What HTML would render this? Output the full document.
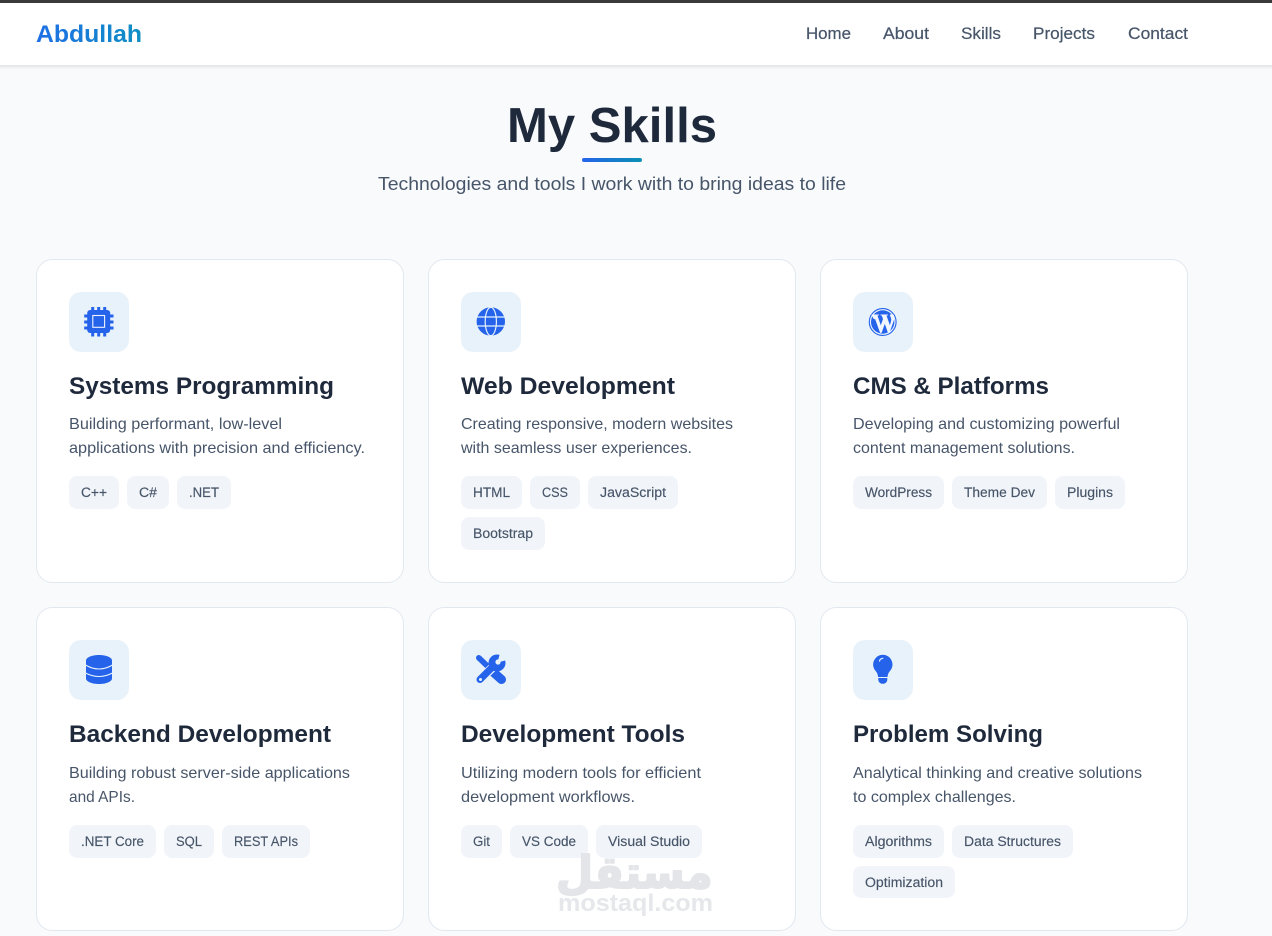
<!DOCTYPE html>
<html lang="en"><head><meta charset="utf-8"><title>My Skills</title>
<style>
html,body{margin:0;padding:0;width:1272px;height:936px;overflow:hidden;background:#f8fafc}
svg{display:block;position:absolute;left:0;top:0}
text{font-family:"Liberation Sans",sans-serif}
.n{font-size:16.4px;fill:#475569;stroke:#475569;stroke-width:.2}
.h{font-size:24.5px;font-weight:700;fill:#1e293b}
.d{font-size:15.6px;fill:#475569}
.t{font-size:13.4px;fill:#475569;stroke:#475569;stroke-width:.15}
.c{fill:#fff;stroke:#e2e8f0}
.b{fill:#f1f5f9}
.i{fill:#e8f2fb}
</style></head><body>
<svg width="1272" height="936" viewBox="0 0 1272 936" xmlns="http://www.w3.org/2000/svg">
<defs>
<linearGradient id="g1" gradientUnits="userSpaceOnUse" x1="36" y1="0" x2="142" y2="0"><stop offset="0" stop-color="#1f6fe5"/><stop offset="1" stop-color="#0e8fc4"/></linearGradient>
<linearGradient id="g2" gradientUnits="userSpaceOnUse" x1="582" y1="0" x2="642" y2="0"><stop offset="0" stop-color="#2563eb"/><stop offset="1" stop-color="#0891b2"/></linearGradient>
<filter id="s" x="-5%" y="-50%" width="110%" height="200%"><feDropShadow dx="0" dy="1" stdDeviation="2.5" flood-color="#000" flood-opacity=".14"/></filter>
</defs>
<rect width="1272" height="936" fill="#f8fafc"/>
<rect x="-10" y="3" width="1292" height="62" fill="#fff" filter="url(#s)"/>
<rect width="1272" height="3" fill="#3a3a3a"/>
<text x="36" y="42" font-size="24.5" font-weight="700" fill="url(#g1)" textLength="106" lengthAdjust="spacingAndGlyphs">Abdullah</text>
<text class="n" x="806" y="39" textLength="45" lengthAdjust="spacingAndGlyphs">Home</text>
<text class="n" x="883" y="39" textLength="46" lengthAdjust="spacingAndGlyphs">About</text>
<text class="n" x="961" y="39" textLength="40" lengthAdjust="spacingAndGlyphs">Skills</text>
<text class="n" x="1033" y="39" textLength="62" lengthAdjust="spacingAndGlyphs">Projects</text>
<text class="n" x="1128" y="39" textLength="60" lengthAdjust="spacingAndGlyphs">Contact</text>

<text x="507" y="142" font-size="49" font-weight="700" fill="#1e293b" textLength="210" lengthAdjust="spacingAndGlyphs">My Skills</text>
<rect x="582" y="158" width="60" height="4" rx="2" fill="url(#g2)"/>
<text x="378" y="190" font-size="18" fill="#475569" textLength="468" lengthAdjust="spacingAndGlyphs">Technologies and tools I work with to bring ideas to life</text>

<!-- cards -->
<rect class="c" x="36.5" y="259.5" width="367" height="323" rx="16"/>
<rect class="c" x="428.5" y="259.5" width="367" height="323" rx="16"/>
<rect class="c" x="820.5" y="259.5" width="367" height="323" rx="16"/>
<rect class="c" x="36.5" y="607.5" width="367" height="323" rx="16"/>
<rect class="c" x="428.5" y="607.5" width="367" height="323" rx="16"/>
<rect class="c" x="820.5" y="607.5" width="367" height="323" rx="16"/>

<rect class="i" x="69" y="292" width="60" height="60" rx="12"/>
<rect class="i" x="461" y="292" width="60" height="60" rx="12"/>
<rect class="i" x="853" y="292" width="60" height="60" rx="12"/>
<rect class="i" x="69" y="640" width="60" height="60" rx="12"/>
<rect class="i" x="461" y="640" width="60" height="60" rx="12"/>
<rect class="i" x="853" y="640" width="60" height="60" rx="12"/>

<!-- chip -->
<g fill="#2563eb">
<rect x="87.200" y="310" width="23" height="23" rx="3"/>
<path d="M91.200 307h3v4h-3zM97.200 307h3v4h-3zM103.200 307h3v4h-3zM91.200 332h3v4.500h-3zM97.200 332h3v4.500h-3zM103.200 332h3v4.500h-3zM84.200 314.500h4v3h-4zM84.200 320.500h4v3h-4zM84.200 326.500h4v3h-4zM109.200 314.500h4.300v3h-4.300zM109.200 320.500h4.300v3h-4.300zM109.200 326.500h4.300v3h-4.300z"/>
<rect x="92.800" y="315.500" width="11.800" height="11.800" fill="#2563eb" stroke="#eef4fc" stroke-width="1.100"/>
</g>
<!-- globe -->
<g>
<circle cx="490.800" cy="321.500" r="14.200" fill="#2563eb"/>
<g fill="none" stroke="#e8f2fb" stroke-width="1.200">
<ellipse cx="490.800" cy="321.500" rx="5.600" ry="14.200"/>
<path d="M476.500 317h28.500M476.500 326h28.500"/>
</g>
</g>
<!-- wordpress -->
<g>
<circle cx="882.700" cy="322" r="13.400" fill="none" stroke="#2563eb" stroke-width="1.100"/>
<circle cx="882.700" cy="322" r="11.700" fill="#2563eb"/>
<path d="M871.500 314.500h7.500v.8l-1.500.3 3.300 9.700 2.200-6.300-1.200-3.400-1.300-.3v-.8h7.500v.8l-1.500.3 3.400 9.600 1.100-3.900c.6-2.400-.1-3.900-.9-5.300l-.3-1.500h3.600l.5 1c.6 2.200.4 3.700-.5 6.200l-3.900 11.200h-1.500l-3.200-9-3.200 9h-1.500l-4.900-13.700-1.600-.3z" fill="#f2f6fd"/>
</g>
<!-- database -->
<g>
<path d="M86 660.500c0-3 5.800-5.500 13-5.500s13 2.500 13 5.500v18c0 3-5.800 5.500-13 5.500s-13-2.500-13-5.500z" fill="#2563eb"/>
<path d="M85.500 665Q99 673 112.500 665M85.500 673Q99 680 112.500 673" fill="none" stroke="#e8f2fb" stroke-width="1.100"/>
</g>
<!-- tools -->
<g>
<path d="M478.800 657.800l13 12.500" fill="none" stroke="#2563eb" stroke-width="5.600" stroke-linecap="round"/>
<path d="M493 672l8.500 7.500" stroke="#2563eb" stroke-width="9" stroke-linecap="round"/>
<path d="M492.500 667.500l-13.500 13" stroke="#e8f2fb" stroke-width="9"/>
<path d="M491.500 668l-11.500 11.500" stroke="#2563eb" stroke-width="7" stroke-linecap="round"/>
<circle cx="497" cy="663" r="8.500" fill="#2563eb"/>
<path d="M497.500 662.500L500 653L507 653L507 660z" fill="#e8f2fb"/>
<circle cx="498" cy="662" r="2.600" fill="#e8f2fb"/>
<circle cx="480.500" cy="679.500" r="1.500" fill="#e8f2fb"/>
</g>
<!-- bulb -->
<g fill="#2563eb">
<path d="M882.800 654.800a9.700 9.700 0 0 1 7 16.400c-1.200 1.300-2 3-2.300 5.800h-9.400c-.3-2.800-1.100-4.500-2.300-5.800a9.700 9.700 0 0 1 7-16.400z"/>
<path d="M878.300 678h9v1.500c0 2.500-2 4.300-4.500 4.300s-4.500-1.800-4.500-4.300z"/>
<path d="M879.500 661c.3-1.300 1.600-2.500 3.300-2.700" fill="none" stroke="#e8f2fb" stroke-width="1.200" stroke-linecap="round"/>
</g>

<!-- titles -->
<text class="h" x="69" y="394" textLength="265" lengthAdjust="spacingAndGlyphs">Systems Programming</text>
<text class="h" x="461" y="394" textLength="214" lengthAdjust="spacingAndGlyphs">Web Development</text>
<text class="h" x="853" y="394" textLength="196" lengthAdjust="spacingAndGlyphs">CMS &amp; Platforms</text>
<text class="h" x="69" y="742" textLength="262" lengthAdjust="spacingAndGlyphs">Backend Development</text>
<text class="h" x="461" y="742" textLength="224" lengthAdjust="spacingAndGlyphs">Development Tools</text>
<text class="h" x="853" y="742" textLength="190" lengthAdjust="spacingAndGlyphs">Problem Solving</text>

<!-- descriptions -->
<text class="d" x="69" y="429" textLength="213" lengthAdjust="spacingAndGlyphs">Building performant, low-level</text>
<text class="d" x="69" y="453" textLength="296" lengthAdjust="spacingAndGlyphs">applications with precision and efficiency.</text>
<text class="d" x="461" y="429" textLength="272" lengthAdjust="spacingAndGlyphs">Creating responsive, modern websites</text>
<text class="d" x="461" y="453" textLength="231" lengthAdjust="spacingAndGlyphs">with seamless user experiences.</text>
<text class="d" x="853" y="429" textLength="267" lengthAdjust="spacingAndGlyphs">Developing and customizing powerful</text>
<text class="d" x="853" y="453" textLength="222" lengthAdjust="spacingAndGlyphs">content management solutions.</text>
<text class="d" x="69" y="778" textLength="281" lengthAdjust="spacingAndGlyphs">Building robust server-side applications</text>
<text class="d" x="69" y="802" textLength="66" lengthAdjust="spacingAndGlyphs">and APIs.</text>
<text class="d" x="461" y="778" textLength="240" lengthAdjust="spacingAndGlyphs">Utilizing modern tools for efficient</text>
<text class="d" x="461" y="802" textLength="174" lengthAdjust="spacingAndGlyphs">development workflows.</text>
<text class="d" x="853" y="778" textLength="289" lengthAdjust="spacingAndGlyphs">Analytical thinking and creative solutions</text>
<text class="d" x="853" y="802" textLength="163" lengthAdjust="spacingAndGlyphs">to complex challenges.</text>

<!-- tags -->
<rect class="b" x="69" y="476" width="50" height="33" rx="8"/><text class="t" x="81" y="497" textLength="26" lengthAdjust="spacingAndGlyphs">C++</text>
<rect class="b" x="127" y="476" width="42" height="33" rx="8"/><text class="t" x="139" y="497" textLength="18" lengthAdjust="spacingAndGlyphs">C#</text>
<rect class="b" x="177" y="476" width="54" height="33" rx="8"/><text class="t" x="189" y="497" textLength="30" lengthAdjust="spacingAndGlyphs">.NET</text>

<rect class="b" x="461" y="476" width="61" height="33" rx="8"/><text class="t" x="473" y="497" textLength="37" lengthAdjust="spacingAndGlyphs">HTML</text>
<rect class="b" x="530" y="476" width="50" height="33" rx="8"/><text class="t" x="542" y="497" textLength="26" lengthAdjust="spacingAndGlyphs">CSS</text>
<rect class="b" x="588" y="476" width="90" height="33" rx="8"/><text class="t" x="600" y="497" textLength="66" lengthAdjust="spacingAndGlyphs">JavaScript</text>
<rect class="b" x="461" y="517" width="84" height="33" rx="8"/><text class="t" x="473" y="538" textLength="60" lengthAdjust="spacingAndGlyphs">Bootstrap</text>

<rect class="b" x="853" y="476" width="91" height="33" rx="8"/><text class="t" x="865" y="497" textLength="67" lengthAdjust="spacingAndGlyphs">WordPress</text>
<rect class="b" x="952" y="476" width="95" height="33" rx="8"/><text class="t" x="964" y="497" textLength="71" lengthAdjust="spacingAndGlyphs">Theme Dev</text>
<rect class="b" x="1055" y="476" width="70" height="33" rx="8"/><text class="t" x="1067" y="497" textLength="46" lengthAdjust="spacingAndGlyphs">Plugins</text>

<rect class="b" x="69" y="825" width="87" height="33" rx="8"/><text class="t" x="81" y="846" textLength="63" lengthAdjust="spacingAndGlyphs">.NET Core</text>
<rect class="b" x="164" y="825" width="50" height="33" rx="8"/><text class="t" x="176" y="846" textLength="26" lengthAdjust="spacingAndGlyphs">SQL</text>
<rect class="b" x="222" y="825" width="88" height="33" rx="8"/><text class="t" x="234" y="846" textLength="64" lengthAdjust="spacingAndGlyphs">REST APIs</text>

<rect class="b" x="461" y="825" width="41" height="33" rx="8"/><text class="t" x="473" y="846" textLength="17" lengthAdjust="spacingAndGlyphs">Git</text>
<rect class="b" x="510" y="825" width="78" height="33" rx="8"/><text class="t" x="522" y="846" textLength="54" lengthAdjust="spacingAndGlyphs">VS Code</text>
<rect class="b" x="596" y="825" width="106" height="33" rx="8"/><text class="t" x="608" y="846" textLength="82" lengthAdjust="spacingAndGlyphs">Visual Studio</text>

<rect class="b" x="853" y="825" width="91" height="33" rx="8"/><text class="t" x="865" y="846" textLength="67" lengthAdjust="spacingAndGlyphs">Algorithms</text>
<rect class="b" x="952" y="825" width="121" height="33" rx="8"/><text class="t" x="964" y="846" textLength="97" lengthAdjust="spacingAndGlyphs">Data Structures</text>
<rect class="b" x="853" y="866" width="102" height="32" rx="8"/><text class="t" x="865" y="887" textLength="78" lengthAdjust="spacingAndGlyphs">Optimization</text>

<!-- watermark -->
<text transform="translate(556 888) scale(1.19 1.25)" font-size="36" font-weight="700" fill="#e3e5e8" stroke="#e3e5e8" stroke-width="1.500" stroke-linejoin="round" style="font-family:'DejaVu Sans',sans-serif" direction="rtl" text-anchor="end">مستقل</text>
<text x="558" y="911" font-size="24.5" font-weight="700" fill="#e5e7ea" textLength="155" lengthAdjust="spacingAndGlyphs">mostaql.com</text>
</svg>
</body></html>
